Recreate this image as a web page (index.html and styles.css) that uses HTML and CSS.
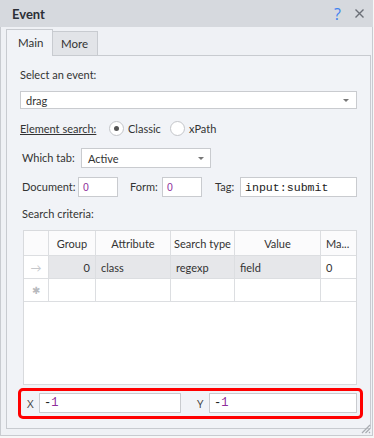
FILE: index.html
```html
<!DOCTYPE html>
<html>
<head>
<meta charset="utf-8">
<link rel="stylesheet" href="styles.css">
</head>
<body>
<div class="window">
  <div class="titlebar">
    <span class="title">Event</span>
    <span class="help">?</span>
    <svg class="close" width="9" height="9" viewBox="0 0 9 9"><path d="M0.5 0.5 L8.5 8.5 M8.5 0.5 L0.5 8.5" stroke="#6b6f77" stroke-width="1.4" fill="none"/></svg>
  </div>
  <div class="body">
    <div class="tabs">
      <div class="tab active">Main</div>
      <div class="tab">More</div>
    </div>
    <div class="panel">
      <div class="label lbl-event">Select an event:</div>
      <div class="combo combo-event"><span class="combo-text">drag</span><span class="arrow"></span></div>
      <div class="radio-row">
        <span class="ul">Element search:</span>
        <span class="opt opt1"><span class="radio checked"></span><span class="opt-label">Classic</span></span>
        <span class="opt"><span class="radio"></span><span class="opt-label">xPath</span></span>
      </div>
      <div class="tab-row">
        <span class="lbl lbl-which">Which tab:</span>
        <div class="combo combo-tab"><span class="combo-text">Active</span><span class="arrow"></span></div>
      </div>
      <div class="doc-row">
        <span class="lbl lbl-doc">Document:</span>
        <div class="input small-input"><span class="num">0</span></div>
        <span class="lbl lbl-form">Form:</span>
        <div class="input small-input"><span class="num">0</span></div>
        <span class="lbl lbl-tag">Tag:</span>
        <div class="input tag-input"><span class="mono">input:submit</span></div>
      </div>
      <div class="label lbl-crit">Search criteria:</div>
      <div class="grid">
        <div class="cell hd ind"></div>
        <div class="cell hd c">Group</div>
        <div class="cell hd c">Attribute</div>
        <div class="cell hd c">Search type</div>
        <div class="cell hd c">Value</div>
        <div class="cell hd last">Ma...</div>

        <div class="cell ind arrow-ind">&#8594;</div>
        <div class="cell sel r">0</div>
        <div class="cell sel">class</div>
        <div class="cell sel">regexp</div>
        <div class="cell sel">field</div>
        <div class="cell last">0</div>

        <div class="cell ind star">&#10033;</div>
        <div class="cell"></div>
        <div class="cell"></div>
        <div class="cell"></div>
        <div class="cell"></div>
        <div class="cell last"></div>
      </div>
      <div class="coords">
        <span class="xy">X</span>
        <div class="input x-input"><span class="mono2"><span class="minus">-</span><span class="one">1</span></span></div>
        <span class="xy y">Y</span>
        <div class="input y-input"><span class="mono2"><span class="minus">-</span><span class="one">1</span></span></div>
      </div>
    </div>
    <svg class="grip" width="12" height="12" viewBox="0 0 12 12">
      <path d="M11 3 L3 11 M11 6.5 L6.5 11 M11 10 L10 11" stroke="#a9acb2" stroke-width="1.2" fill="none"/>
    </svg>
  </div>
</div>
</body>
</html>
```

FILE: styles.css
```css
* { box-sizing: border-box; }
html, body { margin: 0; padding: 0; background: #f7f7f7; }
body {
  font-family: Lato, "Liberation Sans", sans-serif;
  font-size: 11px;
  color: #333;
  width: 374px;
  height: 438px;
  overflow: hidden;
}
.window {
  width: 373px;
  height: 436px;
  border: 1px solid #c8cbd0;
  border-top: none;
  background: #eff1f5;
  position: relative;
}
.titlebar {
  height: 27px;
  background: #d6d9de;
  display: flex;
  align-items: center;
  padding-left: 12px;
  margin-left: -1px;
  margin-right: -1px;
}
.title {
  font-weight: bold;
  font-size: 13px;
  color: #2b2f36;
  flex: 1;
}
.help {
  color: #3f82ef;
  font-size: 16px;
  font-family: "Open Sans", sans-serif;
  margin-right: 14px;
  line-height: 16px;
}
.close { margin-right: 9px; }
.body { padding-left: 5px; }
.tabs {
  display: flex;
  align-items: flex-end;
  margin-top: 2px;
  height: 26px;
}
.tab {
  height: 24px;
  line-height: 23px;
  background: #e2e4e8;
  border: 1px solid #c8cbd0;
  border-bottom: none;
  border-left: none;
  width: 45px;
  padding-left: 8px;
  font-size: 11.5px;
}
.tab.active {
  position: relative;
  z-index: 1;
  height: 27px;
  margin-bottom: -1px;
  border-left: 1px solid #c8cbd0;
  background: #f1f3f7;
  width: 47px;
  padding-left: 11px;
  line-height: 26px;
}
.panel {
  width: 365px;
  height: 374px;
  border: 1px solid #c8cbd0;
  background: #f1f3f7;
  padding: 0 13px;
  display: flex;
  flex-direction: column;
}
.label { height: 18px; line-height: 18px; }
.lbl-event { margin-top: 10px; }
.combo {
  background: #fff;
  border: 1px solid #c9cbcf;
  display: flex;
  align-items: center;
  padding-left: 5px;
}
.combo-text { flex: 1; }
.arrow {
  width: 0; height: 0;
  border-left: 3px solid transparent;
  border-right: 3px solid transparent;
  border-top: 3px solid #777;
  margin-right: 7px;
}
.combo-event { margin-top: 7px; height: 18px; }
.radio-row {
  margin-top: 10px;
  height: 18px;
  display: flex;
  align-items: center;
}
.ul { text-decoration: underline; width: 89px; }
.opt { display: flex; align-items: center; }
.opt1 { width: 61px; }
.radio {
  width: 15px; height: 15px;
  border-radius: 50%;
  border: 1px solid #c3c5c9;
  background: #fff;
  display: flex;
  align-items: center;
  justify-content: center;
  margin-right: 4px;
}
.radio.checked::after {
  content: "";
  width: 5px; height: 5px;
  border-radius: 50%;
  background: #555;
}
.tab-row {
  margin-top: 11px;
  height: 20px;
  display: flex;
  padding-left: 2px;
}
.lbl { line-height: 20px; }
.lbl-which { width: 59px; }
.combo-tab { width: 130px; height: 20px; padding-left: 6px; }
.combo-tab .arrow { margin-right: 6px; }
.doc-row {
  margin-top: 9px;
  height: 20px;
  display: flex;
  padding-left: 2px;
}
.input {
  background: #fff;
  border: 1px solid #c9cbcf;
  height: 20px;
  display: flex;
  align-items: center;
  padding-left: 4px;
}
.lbl-doc { width: 56px; }
.small-input { width: 40px; }
.lbl-form { width: 32px; margin-left: 12px; }
.lbl-tag { width: 25px; margin-left: 13px; }
.tag-input { width: 117px; }
.num { color: #8e2b9a; font-size: 10.5px; font-family: "Liberation Sans", sans-serif; }
.mono { font-family: "Liberation Mono", monospace; font-size: 11.6px; color: #222; }
.lbl-crit { margin-top: 8px; padding-left: 2px; }
.grid {
  margin-top: 7px;
  margin-left: 3px;
  width: 334px;
  height: 155px;
  border: 1px solid #d8dadd;
  background: #fff;
  display: grid;
  grid-template-columns: 25px 47px 75px 64px 86px 35px;
  grid-template-rows: 25px 23px 23px;
  align-content: start;
}
.cell {
  border-right: 1px solid #dcdee1;
  border-bottom: 1px solid #dcdee1;
  display: flex;
  align-items: center;
  padding-left: 5px;
  padding-right: 5px;
  color: #333;
  white-space: nowrap;
  overflow: hidden;
}
.cell.last { border-right: none; padding-left: 5px; }
.hd { background: #fbfbfc; }
.c { justify-content: center; padding: 0; }
.r { justify-content: flex-end; }
.sel { background: #e6e7ea; }
.ind { justify-content: center; padding: 0; color: #c5c7cb; }
.arrow-ind { font-size: 11px; }
.star { font-size: 10px; color: #b8babe; }
.coords {
  margin-top: 3px;
  margin-left: -2px;
  width: 345px;
  height: 31px;
  border: 3px solid #ff0000;
  border-radius: 5px;
  display: flex;
  align-items: center;
  padding-left: 6px;
  padding-bottom: 1px;
}
.xy { width: 12px; color: #444; font-family: "Open Sans", sans-serif; font-size: 11.5px; }
.y { margin-left: 16px; }
.x-input { width: 142px; height: 20px; }
.y-input { width: 148px; height: 20px; }
.mono2 { font-family: "Liberation Mono", monospace; font-size: 12px; }
.minus { color: #222; }
.one { color: #8e2b9a; }
.grip { position: absolute; right: 1px; bottom: 1px; }
```
